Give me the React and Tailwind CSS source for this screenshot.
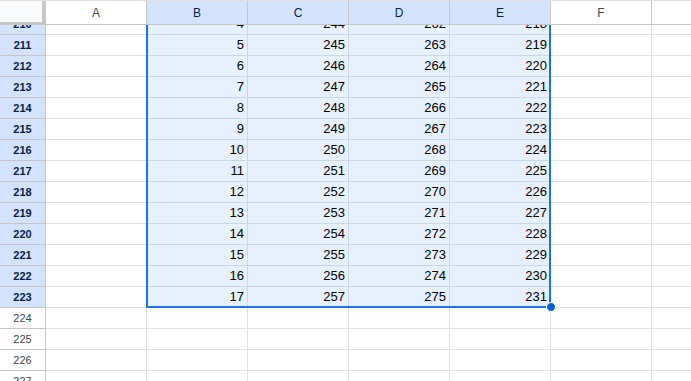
import React from "react";

const cols = ["A", "B", "C", "D", "E", "F", "G"];
const selCols = ["B", "C", "D", "E"];
const rows = [];
for (let r = 210; r <= 227; r++) rows.push(r);

function val(r, c) {
  if (r > 223) return "";
  if (c === "B") return r - 206;
  if (c === "C") return r + 34;
  if (c === "D") return r + 52;
  if (c === "E") return r + 8;
  return "";
}

export default function App() {
  return (
    <div
      className="relative w-[691px] h-[381px] overflow-hidden bg-white"
      style={{ fontFamily: '"Liberation Sans", Arial, sans-serif' }}
    >
      {/* header */}
      <div className="flex h-[25px] border-t border-[#e0e0e0]">
        <div className="w-[46px] shrink-0 bg-[#f8f9fa] border-r-[4px] border-b-[3px] border-[#c4c7c5]" />
        {cols.map((c) => {
          const sel = selCols.includes(c);
          return (
            <div
              key={c}
              className={
                sel
                  ? "w-[101px] shrink-0 flex items-center justify-center text-[12px] bg-[#d3e3fd] text-[#041e49] border-r border-b border-[#c4c7c5]"
                  : "w-[101px] shrink-0 flex items-center justify-center text-[12px] bg-white text-[#444746] border-r border-b border-[#c4c7c5]"
              }
            >
              {c === "G" ? "" : c}
            </div>
          );
        })}
      </div>
      {/* body */}
      <div className="relative h-[356px] overflow-hidden">
        <div className="-mt-[11px]">
          {rows.map((r) => {
            const rowSel = r <= 223;
            return (
              <div key={r} className="flex h-[21px]">
                <div
                  className={
                    rowSel
                      ? "w-[46px] shrink-0 flex items-center justify-center text-[11px] font-bold bg-[#d3e3fd] text-[#041e49] border-r border-b border-[#c4c7c5]"
                      : "w-[46px] shrink-0 flex items-center justify-center text-[11px] bg-white text-[#444746] border-r border-b border-[#c4c7c5]"
                  }
                >
                  {r}
                </div>
                {cols.map((c) => {
                  const sel = rowSel && selCols.includes(c);
                  return (
                    <div
                      key={c}
                      className={
                        sel
                          ? "w-[101px] shrink-0 flex items-center justify-end pr-[3px] text-[13px] text-black bg-[#e7f0fd] border-r border-b border-[#cbd6e8]"
                          : "w-[101px] shrink-0 flex items-center justify-end pr-[3px] text-[13px] text-black bg-white border-r border-b border-[#e1e1e1]"
                      }
                    >
                      {val(r, c)}
                    </div>
                  );
                })}
              </div>
            );
          })}
        </div>
        {/* selection outline */}
        <div className="absolute left-[146px] top-0 w-[405px] h-[283px] border-2 border-t-0 border-[#1a73e8] pointer-events-none" />
      </div>
      {/* fill handle */}
      <div className="absolute left-[546px] top-[302px] w-[10px] h-[10px] rounded-full bg-[#0b60d0] border border-white" />
    </div>
  );
}
